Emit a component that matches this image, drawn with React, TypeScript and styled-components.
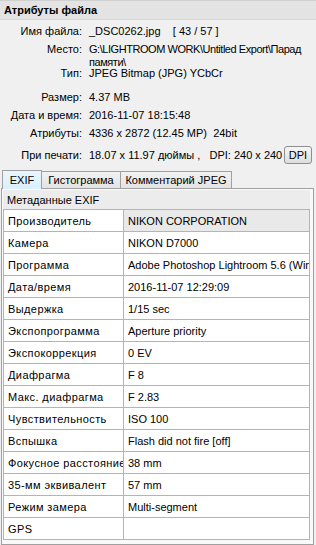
import React from "react";
import styled, { createGlobalStyle } from "styled-components";

const Global = createGlobalStyle`
  html, body { margin: 0; padding: 0; background: #f0f0f0; }
  body { font-family: "Liberation Sans", Arial, sans-serif; font-size: 11px; color: #000; }
`;

const Root = styled.div`
  width: 316px;
  height: 545px;
  overflow: hidden;
  background: #f0f0f0;
  display: flex;
  flex-direction: column;
  & > * { flex-shrink: 0; }
`;

const SectionHeader = styled.div`
  height: 20px;
  box-sizing: border-box;
  padding-left: 4px;
  display: flex;
  align-items: center;
  font-weight: bold;
  font-size: 11px;
  background: #e3e3e3;
  border-top: 1px solid #d0d0d0;
  border-bottom: 1px solid #d6d6d6;
`;

const AttrList = styled.div`
  display: flex;
  flex-direction: column;
  & > * { flex-shrink: 0; }
`;

const AttrRow = styled.div<{ $mt: number; $h?: number }>`
  display: flex;
  align-items: ${(p) => (p.$h ? "center" : "flex-start")};
  margin-top: ${(p) => p.$mt}px;
  ${(p) => (p.$h ? `height: ${p.$h}px;` : "")}
  line-height: 13px;
`;

const AttrLabel = styled.div`
  width: 89px;
  flex: none;
  text-align: right;
  padding-right: 7px;
  box-sizing: border-box;
  white-space: nowrap;
`;

const AttrValue = styled.div<{ $tight?: boolean }>`
  flex: 1;
  min-width: 0;
  white-space: pre;
  letter-spacing: ${(p) => (p.$tight ? "-0.45px" : "normal")};
`;

const DpiButton = styled.button`
  font-family: "Liberation Sans", Arial, sans-serif;
  font-size: 11px;
  height: 18px;
  width: 28px;
  margin: 0 4px 0 1px;
  padding: 0;
  border: 1px solid #8f8f8f;
  border-radius: 3px;
  background: linear-gradient(#f6f6f6, #dedede);
  color: #000;
`;

const TabBar = styled.div`
  display: flex;
  align-items: flex-end;
  margin-top: 5px;
  padding-left: 2px;
  height: 19px;
`;

const Tab = styled.div<{ $active?: boolean; $w: number }>`
  width: ${(p) => p.$w}px;
  box-sizing: border-box;
  height: ${(p) => (p.$active ? 19 : 17)}px;
  display: flex;
  align-items: center;
  justify-content: center;
  border: 1px solid #a0a0a0;
  border-bottom: none;
  margin-left: ${(p) => (p.$active ? 0 : -1)}px;
  background: ${(p) =>
    p.$active ? "linear-gradient(#eaf6fd, #d9f0fc)" : "linear-gradient(#f2f2f2, #e3e3e3)"};
  position: relative;
  z-index: ${(p) => (p.$active ? 1 : 0)};
  margin-bottom: ${(p) => (p.$active ? -1 : 0)}px;
`;

const Panel = styled.div`
  flex: 1 1 auto !important;
  min-height: 0;
  overflow: hidden;
  margin: 0 2px 0 1px;
  border: 1px solid #a0a0a0;
  background: #f9f9f9;
  display: flex;
  flex-direction: column;
  padding: 1px 3px 0 1px;
  & > * { flex-shrink: 0; }
`;

const PanelTitle = styled.div`
  height: 19px;
  display: flex;
  align-items: center;
  padding-left: 4px;
  background: #ececec;
`;

const Table = styled.div`
  display: grid;
  grid-template-columns: 120px 1fr;
  border-top: 1px solid #b4b4b4;
  border-left: 1px solid #b4b4b4;
  background: #fff;
`;

const Cell = styled.div<{ $shade?: boolean; $wide?: boolean }>`
  height: 22px;
  box-sizing: border-box;
  border-right: 1px solid #b4b4b4;
  border-bottom: 1px solid #b4b4b4;
  padding-left: 4px;
  display: flex;
  align-items: center;
  white-space: nowrap;
  overflow: hidden;
  letter-spacing: ${(p) => (p.$wide ? "0.4px" : "normal")};
  background: ${(p) => (p.$shade ? "#e9e9e9" : "#fff")};
`;

const attrs: { label: string; value: string; mt: number; tight?: boolean }[] = [
  { label: "Имя файла:", value: "_DSC0262.jpg    [ 43 / 57 ]", mt: 5 },
  { label: "Место:", value: "G:\\LIGHTROOM WORK\\Untitled Export\\Парад\nпамяти\\", mt: 5, tight: true },
  { label: "Тип:", value: "JPEG Bitmap (JPG) YCbCr", mt: -2 },
  { label: "Размер:", value: "4.37 MB", mt: 11 },
  { label: "Дата и время:", value: "2016-11-07 18:15:48", mt: 5 },
  { label: "Атрибуты:", value: "4336 x 2872 (12.45 MP)  24bit", mt: 5 },
];

const exif: [string, string][] = [
  ["Производитель", "NIKON CORPORATION"],
  ["Камера", "NIKON D7000"],
  ["Программа", "Adobe Photoshop Lightroom 5.6 (Windows)"],
  ["Дата/время", "2016-11-07 12:29:09"],
  ["Выдержка", "1/15 sec"],
  ["Экспопрограмма", "Aperture priority"],
  ["Экспокоррекция", "0 EV"],
  ["Диафрагма", "F 8"],
  ["Макс. диафрагма", "F 2.83"],
  ["Чувствительность", "ISO 100"],
  ["Вспышка", "Flash did not fire [off]"],
  ["Фокусное расстояние", "38 mm"],
  ["35-мм эквивалент", "57 mm"],
  ["Режим замера", "Multi-segment"],
  ["GPS", ""],
];

export default function App() {
  return (
    <Root>
      <Global />
      <SectionHeader>Атрибуты файла</SectionHeader>
      <AttrList>
        {attrs.map((a) => (
          <AttrRow key={a.label} $mt={a.mt}>
            <AttrLabel>{a.label}</AttrLabel>
            <AttrValue $tight={a.tight}>{a.value}</AttrValue>
          </AttrRow>
        ))}
        <AttrRow $mt={6} $h={18}>
          <AttrLabel>При печати:</AttrLabel>
          <AttrValue>{"18.07 x 11.97 дюймы ,   DPI: 240 x 240"}</AttrValue>
          <DpiButton>DPI</DpiButton>
        </AttrRow>
      </AttrList>
      <TabBar>
        <Tab $active $w={40}>EXIF</Tab>
        <Tab $w={80}>Гистограмма</Tab>
        <Tab $w={112}>Комментарий JPEG</Tab>
      </TabBar>
      <Panel>
        <PanelTitle>Метаданные EXIF</PanelTitle>
        <Table>
          {exif.map(([k, v], i) => (
            <React.Fragment key={k}>
              <Cell $wide>{k}</Cell>
              <Cell $shade={i === 0}>{v}</Cell>
            </React.Fragment>
          ))}
        </Table>
      </Panel>
    </Root>
  );
}
